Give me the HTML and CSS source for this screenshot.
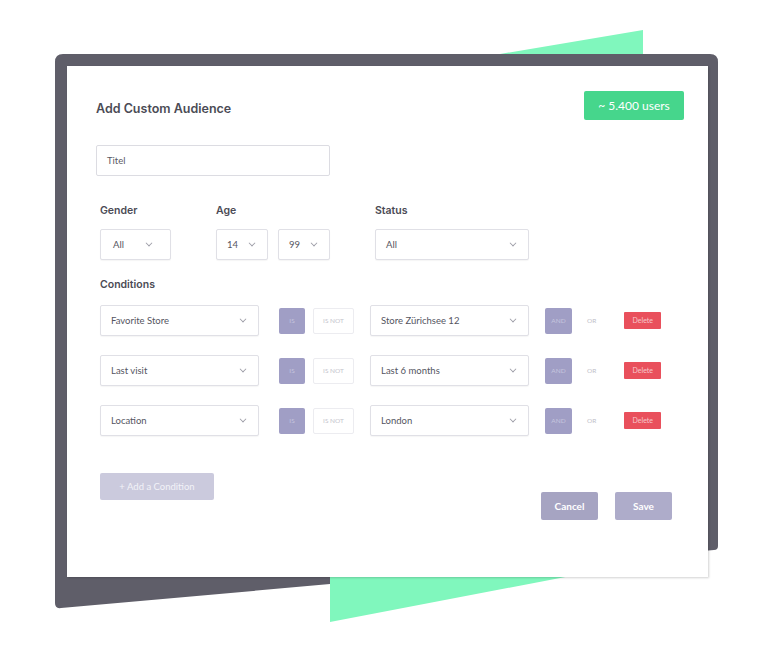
FILE: index.html
```html
<!DOCTYPE html>
<html lang="en">
<head>
  <meta charset="UTF-8">
  <title>Add Custom Audience</title>
  <link rel="stylesheet" href="styles.css">
</head>
<body>
  <div class="stage">
    <svg class="backdrop" width="768" height="654" viewBox="0 0 768 654">
      <polygon points="500,54 643,30 643,80" fill="#80f7bd"/>
      <path d="M55,62 Q55,54 63,54 L710,54 Q718,54 718,62 L718,546 Q718,550 714,550 L61,608 Q55,609 55,603 Z" fill="#5f5e69"/>
      <polygon points="330,560 654,560 330,622" fill="#80f7bd"/>
    </svg>

    <div class="card">
      <div class="header">
        <h2>Add Custom Audience</h2>
        <span class="badge">~ 5.400 users</span>
      </div>

      <div class="title-input">Titel</div>

      <div class="filters">
        <div class="group">
          <label>Gender</label>
          <div class="select w-gender">All <span class="chev"></span></div>
        </div>
        <div class="group">
          <label>Age</label>
          <div class="pair">
            <div class="select w-age">14 <span class="chev"></span></div>
            <div class="select w-age">99 <span class="chev"></span></div>
          </div>
        </div>
        <div class="group">
          <label>Status</label>
          <div class="select w-status">All <span class="chev"></span></div>
        </div>
      </div>

      <div class="conditions">
        <label>Conditions</label>
        <div class="row">
          <div class="select w-field">Favorite Store <span class="chev"></span></div>
          <span class="tag on is">IS</span>
          <span class="tag off">IS NOT</span>
          <div class="select w-value">Store Zürichsee 12 <span class="chev"></span></div>
          <span class="tag on and">AND</span>
          <span class="or">OR</span>
          <span class="delete">Delete</span>
        </div>
        <div class="row">
          <div class="select w-field">Last visit <span class="chev"></span></div>
          <span class="tag on is">IS</span>
          <span class="tag off">IS NOT</span>
          <div class="select w-value">Last 6 months <span class="chev"></span></div>
          <span class="tag on and">AND</span>
          <span class="or">OR</span>
          <span class="delete">Delete</span>
        </div>
        <div class="row">
          <div class="select w-field">Location <span class="chev"></span></div>
          <span class="tag on is">IS</span>
          <span class="tag off">IS NOT</span>
          <div class="select w-value">London <span class="chev"></span></div>
          <span class="tag on and">AND</span>
          <span class="or">OR</span>
          <span class="delete">Delete</span>
        </div>
      </div>

      <div class="footer">
        <button class="add">+ Add a Condition</button>
        <div class="actions">
          <button class="cancel">Cancel</button>
          <button class="save">Save</button>
        </div>
      </div>
    </div>
  </div>
</body>
</html>
```

FILE: styles.css
```css
body {
  margin: 0;
  background: #fff;
  font-family: Lato, "Open Sans", sans-serif;
  color: #55555f;
}
.stage {
  position: relative;
  width: 768px;
  height: 654px;
  overflow: hidden;
}
.backdrop {
  position: absolute;
  left: 0;
  top: 0;
}
.card {
  position: relative;
  margin: 66px 0 0 67px;
  width: 641px;
  height: 511px;
  box-sizing: border-box;
  background: #fff;
  box-shadow: 1px 1px 2px rgba(0,0,0,0.18);
  padding: 25px 24px 0 29px;
}
.header {
  display: flex;
  justify-content: space-between;
  align-items: center;
  height: 29px;
}
h2 {
  margin: 5px 0 0;
  font-family: Inter, "Liberation Sans", sans-serif;
  font-size: 12.5px;
  font-weight: 600;
  color: #4b4b55;
}
.badge {
  background: #46d68c;
  color: #fff;
  font-size: 12px;
  width: 100px;
  height: 29px;
  line-height: 29px;
  text-align: center;
  border-radius: 2px;
}
.title-input {
  margin-top: 25px;
  width: 234px;
  height: 31px;
  box-sizing: border-box;
  border: 1px solid #dcdce2;
  border-radius: 2px;
  padding-left: 10px;
  line-height: 29px;
  font-size: 9.5px;
  color: #5a5a64;
}
label {
  display: block;
  font-family: Inter, "Liberation Sans", sans-serif;
  font-size: 10.5px;
  font-weight: 600;
  color: #4b4b55;
  height: 14px;
  line-height: 14px;
}
.filters {
  display: flex;
  gap: 45px;
  margin: 28px 0 0 4px;
}
.group label {
  margin-bottom: 11px;
}
.pair {
  display: flex;
  gap: 10px;
}
.select {
  display: flex;
  align-items: center;
  justify-content: space-between;
  height: 31px;
  box-sizing: border-box;
  border: 1px solid #e0e0e6;
  border-radius: 2px;
  box-shadow: 0 1px 1px rgba(0,0,0,0.04);
  padding: 0 12px 0 10px;
  font-size: 9.5px;
  color: #55555f;
  background: #fff;
}
.w-gender { width: 71px; padding-right: 18px; padding-left: 12px; }
.w-age { width: 52px; }
.w-status { width: 154px; }
.w-field { width: 159px; }
.w-value { width: 159px; }
.chev {
  width: 5px;
  height: 5px;
  border-right: 1px solid #9a9aa4;
  border-bottom: 1px solid #9a9aa4;
  transform: rotate(45deg) scale(0.8);
  margin-top: -3px;
}
.conditions {
  margin: 18px 0 0 4px;
}
.conditions label {
  margin-bottom: 13px;
}
.row {
  display: flex;
  align-items: center;
  height: 31px;
  margin-bottom: 19px;
}
.tag {
  height: 26px;
  line-height: 26px;
  box-sizing: border-box;
  text-align: center;
  font-size: 6.5px;
  border-radius: 2px;
}
.tag.on {
  background: #a09ec5;
  color: #c6c5de;
}
.tag.is {
  width: 26px;
  margin-left: 20px;
}
.tag.off {
  width: 41px;
  margin: 0 16px 0 8px;
  border: 1px solid #ececf0;
  color: #c4c4cc;
  line-height: 24px;
}
.tag.and {
  width: 27px;
  margin-left: 16px;
}
.or {
  font-size: 6.5px;
  color: #c0c0c8;
  margin-left: 15px;
}
.delete {
  margin-left: 28px;
  background: #e9505c;
  color: #f7c8cc;
  font-size: 7px;
  width: 37px;
  height: 17px;
  line-height: 17px;
  text-align: center;
  border-radius: 1px;
}
.footer {
  display: flex;
  justify-content: space-between;
  align-items: flex-start;
  margin: 37px 12px 0 4px;
}
button {
  border: none;
  border-radius: 2px;
  color: #fff;
  font-family: Lato, "Open Sans", sans-serif;
  padding: 0;
  cursor: pointer;
}
.add {
  width: 114px;
  height: 27px;
  background: #cbcadd;
  font-size: 9.5px;
  color: #f2f2f8;
}
.actions {
  display: flex;
  gap: 17px;
  margin-top: 19px;
}
.cancel, .save {
  width: 57px;
  height: 28px;
  font-size: 10px;
  font-weight: 700;
}
.cancel {
  background: #a6a4c2;
}
.save {
  background: #aeacca;
}
```
